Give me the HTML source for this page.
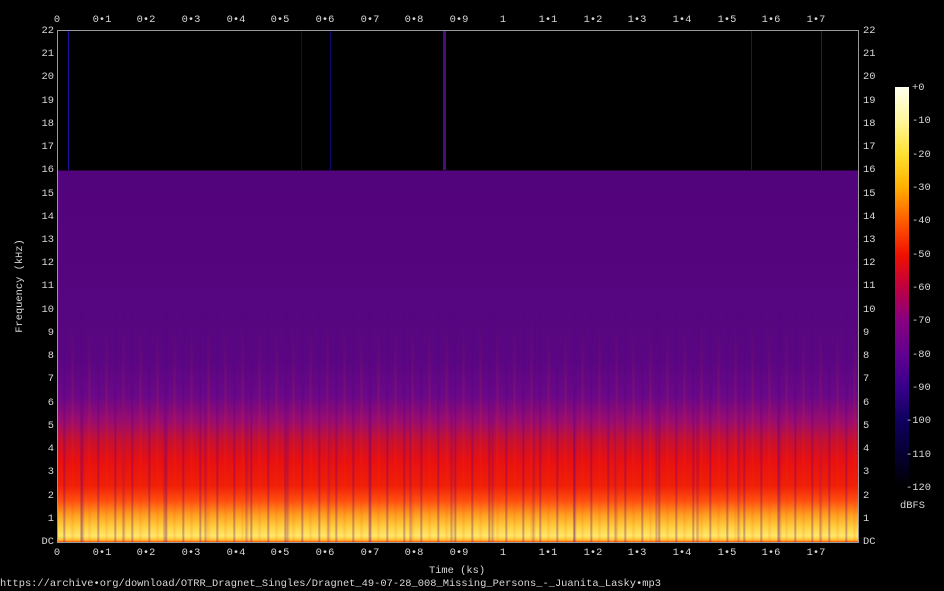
<!DOCTYPE html>
<html><head><style>
body{margin:0;background:#000;width:944px;height:591px;overflow:hidden;position:relative;font-family:"Liberation Mono",monospace;font-size:10.4px;color:#d8d8d8}
.l{position:absolute;line-height:12px;white-space:nowrap}
.c{transform:translateX(-50%)}
.r{width:40px;text-align:right}
#plot{position:absolute;left:57px;top:30px;width:800px;height:511px;border:1px solid #999;overflow:hidden;
background:linear-gradient(to bottom,#000 0,#000 139px,#52047c 140px,#560680 280px,#5a0682 330px,#6a0888 365px,#9a0c70 390px,#c81030 410px,#e81010 430px,#f02008 455px,#ff5010 470px,#ffa020 484px,#ffd040 496px,#ffe868 505px,#ffc030 509px,#ff5010 511px)}
#str{position:absolute;left:0;top:0;width:800px;height:511px;
background:
repeating-linear-gradient(to right,rgba(80,0,120,0) 0,rgba(80,0,120,0) 5px,rgba(90,0,130,.4) 6px,rgba(80,0,120,0) 8px,rgba(80,0,120,0) 13px,rgba(255,60,0,.15) 14px,rgba(80,0,120,0) 17px),
repeating-linear-gradient(to right,rgba(0,0,0,0) 0,rgba(0,0,0,0) 23px,rgba(100,0,140,.3) 24px,rgba(0,0,0,0) 27px,rgba(0,0,0,0) 41px);
-webkit-mask:linear-gradient(to bottom,transparent 0,transparent 280px,#000 360px,#000 511px)}
.v{position:absolute;top:0;height:139px;width:1px;background:#1a1090}
#cb{position:absolute;left:895px;top:87px;width:14px;height:400px;
background:linear-gradient(to bottom,#fffff0 0,#fff8a0 8%,#ffe030 17%,#ffb000 25%,#ff6000 33%,#f01000 42%,#c00040 50%,#8a0080 58%,#600090 67%,#38008a 75%,#100060 83%,#050030 92%,#000 100%)}
</style></head><body>
<div id="plot"><div id="str"></div>
<div class="v" style="left:10px;background:#2010a0"></div>
<div class="v" style="left:385px;width:3px;background:#4a0a80"></div>
<div class="v" style="left:763px;background:#2010a0"></div>
<div class="v" style="left:693px;background:#18108a"></div>
<div class="v" style="left:243px;background:#100870"></div>
<div class="v" style="left:272px;background:#100870"></div>
</div>
<div id="cb"></div>
<div class="l c" style="left:57px;top:14px">0</div>
<div class="l c" style="left:102px;top:14px">0•1</div>
<div class="l c" style="left:146px;top:14px">0•2</div>
<div class="l c" style="left:191px;top:14px">0•3</div>
<div class="l c" style="left:236px;top:14px">0•4</div>
<div class="l c" style="left:280px;top:14px">0•5</div>
<div class="l c" style="left:325px;top:14px">0•6</div>
<div class="l c" style="left:370px;top:14px">0•7</div>
<div class="l c" style="left:414px;top:14px">0•8</div>
<div class="l c" style="left:459px;top:14px">0•9</div>
<div class="l c" style="left:503px;top:14px">1</div>
<div class="l c" style="left:548px;top:14px">1•1</div>
<div class="l c" style="left:593px;top:14px">1•2</div>
<div class="l c" style="left:637px;top:14px">1•3</div>
<div class="l c" style="left:682px;top:14px">1•4</div>
<div class="l c" style="left:727px;top:14px">1•5</div>
<div class="l c" style="left:771px;top:14px">1•6</div>
<div class="l c" style="left:816px;top:14px">1•7</div>
<div class="l c" style="left:57px;top:547px">0</div>
<div class="l c" style="left:102px;top:547px">0•1</div>
<div class="l c" style="left:146px;top:547px">0•2</div>
<div class="l c" style="left:191px;top:547px">0•3</div>
<div class="l c" style="left:236px;top:547px">0•4</div>
<div class="l c" style="left:280px;top:547px">0•5</div>
<div class="l c" style="left:325px;top:547px">0•6</div>
<div class="l c" style="left:370px;top:547px">0•7</div>
<div class="l c" style="left:414px;top:547px">0•8</div>
<div class="l c" style="left:459px;top:547px">0•9</div>
<div class="l c" style="left:503px;top:547px">1</div>
<div class="l c" style="left:548px;top:547px">1•1</div>
<div class="l c" style="left:593px;top:547px">1•2</div>
<div class="l c" style="left:637px;top:547px">1•3</div>
<div class="l c" style="left:682px;top:547px">1•4</div>
<div class="l c" style="left:727px;top:547px">1•5</div>
<div class="l c" style="left:771px;top:547px">1•6</div>
<div class="l c" style="left:816px;top:547px">1•7</div>
<div class="l c" style="left:457px;top:565px">Time (ks)</div>
<div class="l r" style="left:14px;top:25px">22</div><div class="l" style="left:863px;top:25px">22</div>
<div class="l r" style="left:14px;top:48px">21</div><div class="l" style="left:863px;top:48px">21</div>
<div class="l r" style="left:14px;top:71px">20</div><div class="l" style="left:863px;top:71px">20</div>
<div class="l r" style="left:14px;top:95px">19</div><div class="l" style="left:863px;top:95px">19</div>
<div class="l r" style="left:14px;top:118px">18</div><div class="l" style="left:863px;top:118px">18</div>
<div class="l r" style="left:14px;top:141px">17</div><div class="l" style="left:863px;top:141px">17</div>
<div class="l r" style="left:14px;top:164px">16</div><div class="l" style="left:863px;top:164px">16</div>
<div class="l r" style="left:14px;top:188px">15</div><div class="l" style="left:863px;top:188px">15</div>
<div class="l r" style="left:14px;top:211px">14</div><div class="l" style="left:863px;top:211px">14</div>
<div class="l r" style="left:14px;top:234px">13</div><div class="l" style="left:863px;top:234px">13</div>
<div class="l r" style="left:14px;top:257px">12</div><div class="l" style="left:863px;top:257px">12</div>
<div class="l r" style="left:14px;top:280px">11</div><div class="l" style="left:863px;top:280px">11</div>
<div class="l r" style="left:14px;top:304px">10</div><div class="l" style="left:863px;top:304px">10</div>
<div class="l r" style="left:14px;top:327px">9</div><div class="l" style="left:863px;top:327px">9</div>
<div class="l r" style="left:14px;top:350px">8</div><div class="l" style="left:863px;top:350px">8</div>
<div class="l r" style="left:14px;top:373px">7</div><div class="l" style="left:863px;top:373px">7</div>
<div class="l r" style="left:14px;top:397px">6</div><div class="l" style="left:863px;top:397px">6</div>
<div class="l r" style="left:14px;top:420px">5</div><div class="l" style="left:863px;top:420px">5</div>
<div class="l r" style="left:14px;top:443px">4</div><div class="l" style="left:863px;top:443px">4</div>
<div class="l r" style="left:14px;top:466px">3</div><div class="l" style="left:863px;top:466px">3</div>
<div class="l r" style="left:14px;top:490px">2</div><div class="l" style="left:863px;top:490px">2</div>
<div class="l r" style="left:14px;top:513px">1</div><div class="l" style="left:863px;top:513px">1</div>
<div class="l r" style="left:14px;top:536px">DC</div><div class="l" style="left:863px;top:536px">DC</div>
<div class="l" style="left:-27px;top:280px;transform:rotate(-90deg);transform-origin:center">Frequency (kHz)</div>
<div class="l" style="left:912px;top:82px">+0</div>
<div class="l" style="left:912px;top:115px">-10</div>
<div class="l" style="left:912px;top:149px">-20</div>
<div class="l" style="left:912px;top:182px">-30</div>
<div class="l" style="left:912px;top:215px">-40</div>
<div class="l" style="left:912px;top:249px">-50</div>
<div class="l" style="left:912px;top:282px">-60</div>
<div class="l" style="left:912px;top:315px">-70</div>
<div class="l" style="left:912px;top:349px">-80</div>
<div class="l" style="left:912px;top:382px">-90</div>
<div class="l" style="left:906px;top:415px">-100</div>
<div class="l" style="left:906px;top:449px">-110</div>
<div class="l" style="left:906px;top:482px">-120</div>
<div class="l" style="left:900px;top:500px">dBFS</div>
<div class="l" style="left:0;top:578px">https://archive•org/download/OTRR_Dragnet_Singles/Dragnet_49-07-28_008_Missing_Persons_-_Juanita_Lasky•mp3</div>
</body></html>
